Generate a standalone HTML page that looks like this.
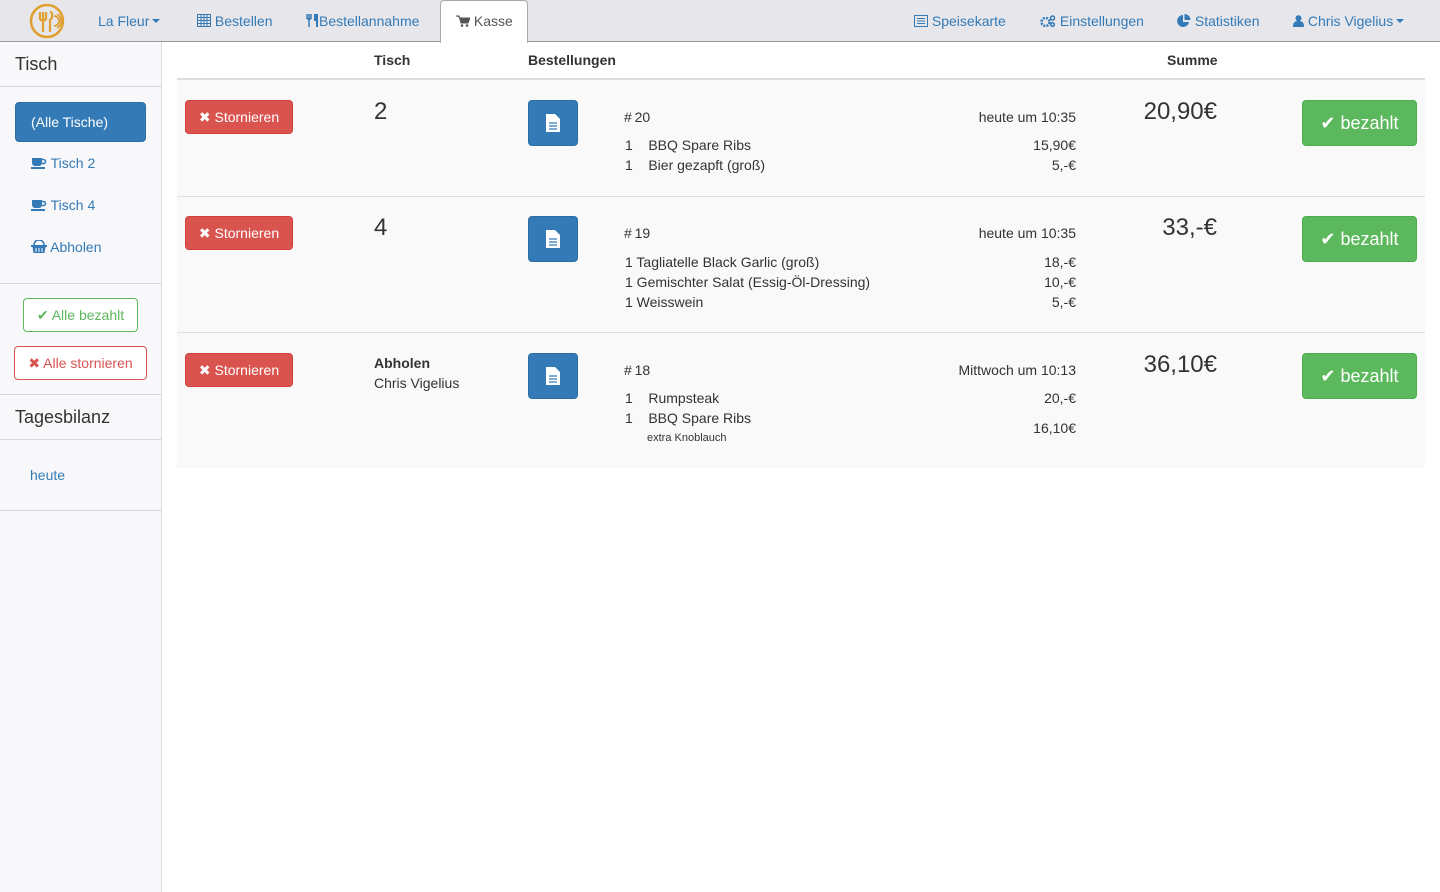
<!DOCTYPE html>
<html><head><meta charset="utf-8"><style>
*{box-sizing:border-box;margin:0;padding:0}
body{width:1440px;height:892px;position:relative;overflow:hidden;background:#fff;font-family:"Liberation Sans",sans-serif;font-size:14px;color:#333}
.a{position:absolute;white-space:nowrap;line-height:20px}
.nav{position:absolute;left:0;top:0;width:1440px;height:42px;background:#e7e7eb;border-bottom:1px solid #9a9a9a}
.nl{color:#337ab7;font-size:14px}
.side{position:absolute;left:0;top:42px;width:162px;height:850px;background:#f8f8fa;border-right:1px solid #ddd}
.hr{position:absolute;left:0;width:161px;height:1px;background:#d5d5dc}
.btn{position:absolute;border-radius:4px;text-align:center;line-height:20px}
.red{background:#d9534f;border:1px solid #d43f3a;color:#fff}
.blue{background:#337ab7;border:1px solid #2e6da4;color:#fff}
.green{background:#5cb85c;border:1px solid #4cae4c;color:#fff}
.row{position:absolute;left:177px;width:1248px;background:#f9f9f9;border-top:1px solid #ddd}
.r{text-align:right}
svg{vertical-align:-1px}
.car{display:inline-block;width:0;height:0;border-left:4px solid transparent;border-right:4px solid transparent;border-top:4px solid currentColor;vertical-align:3px;margin-left:3px}
</style></head><body>
<div class="nav"></div>
<svg style="position:absolute;left:29px;top:3px" width="36" height="36" viewBox="0 0 36 36"><circle cx="18" cy="18" r="16" fill="none" stroke="#e0a030" stroke-width="2.5"/><path d="M11 9v8M14 9v8M17 9v8M11 17h6M14 17v12M21 9c3 0 3 6 0 8v12" stroke="#e0a030" stroke-width="2.2" fill="none"/><path d="M25 13a5 5 0 0 1 0 10M28 11a8 8 0 0 1 0 14" stroke="#e0a030" stroke-width="1.8" fill="none"/></svg>
<div class="a nl" style="left:98px;top:11px">La Fleur<span class="car"></span></div>
<div class="a nl" style="left:197px;top:11px"><svg width="14" height="13" viewBox="0 0 14 13"><rect x="0.5" y="0.5" width="13" height="12" fill="none" stroke="#337ab7"/><path d="M1 3.5h12M1 6.5h12M1 9.5h12M4 1v11M7 1v11M10 1v11" stroke="#337ab7"/></svg> Bestellen</div>
<div class="a nl" style="left:306px;top:11px"><svg width="13" height="13" viewBox="0 0 13 13"><path d="M1 0v5M3 0v5M5 0v5M1 5h4M3 5v8" stroke="#337ab7" stroke-width="1.5" fill="none"/><path d="M8 0h4v13h-2v-6h-2z" fill="#337ab7"/></svg>Bestellannahme</div>
<div style="position:absolute;left:440px;top:0;width:88px;height:43px;background:#fff;border:1px solid #aaa;border-bottom:none;border-radius:4px 4px 0 0"></div>
<div class="a" style="left:456px;top:11px;color:#555"><svg width="14" height="12" viewBox="0 0 14 12"><path d="M0 1h3l2 7h7l2-5H4" fill="#555" stroke="#555"/><circle cx="6" cy="10.5" r="1.3" fill="#555"/><circle cx="11" cy="10.5" r="1.3" fill="#555"/></svg> Kasse</div>
<div class="a nl" style="left:914px;top:11px"><svg width="14" height="12" viewBox="0 0 14 12"><rect x="0.5" y="0.5" width="13" height="11" fill="none" stroke="#337ab7"/><path d="M3 3.5h8M3 6h8M3 8.5h8" stroke="#337ab7"/></svg> Speisekarte</div>
<div class="a nl" style="left:1040px;top:11px"><svg width="16" height="12" viewBox="0 0 16 12"><circle cx="5.5" cy="7" r="4" fill="none" stroke="#337ab7" stroke-width="2.5" stroke-dasharray="2 1.2"/><circle cx="12.5" cy="3" r="2" fill="none" stroke="#337ab7" stroke-width="1.5"/><circle cx="12.5" cy="9.5" r="1.8" fill="none" stroke="#337ab7" stroke-width="1.5"/></svg> Einstellungen</div>
<div class="a nl" style="left:1177px;top:11px"><svg width="14" height="13" viewBox="0 0 14 13"><path d="M6 1a6 6 0 1 0 6 7H6z" fill="#337ab7"/><path d="M7.5 0v6h6a6 6 0 0 0-6-6z" fill="#337ab7"/></svg> Statistiken</div>
<div class="a nl" style="left:1293px;top:11px"><svg width="11" height="12" viewBox="0 0 11 12"><circle cx="5.5" cy="3.2" r="3" fill="#337ab7"/><path d="M0 12c0-5 2-6 5.5-6S11 7 11 12z" fill="#337ab7"/></svg> Chris Vigelius<span class="car"></span></div>

<div class="side"></div>
<div class="a" style="left:15px;top:53px;font-size:18px;line-height:22px">Tisch</div>
<div class="hr" style="top:86px"></div>
<div class="btn blue" style="left:15px;top:102px;width:131px;height:40px;line-height:38px;text-align:left;padding-left:15px">(Alle Tische)</div>
<div class="a nl" style="left:31px;top:153px"><svg width="16" height="11" viewBox="0 0 16 11"><path d="M1 0h10v5a3 3 0 0 1-3 3H4a3 3 0 0 1-3-3z" fill="#337ab7"/><path d="M11 1.5h1.5a2 2 0 0 1 0 4H11" stroke="#337ab7" fill="none" stroke-width="1.5"/><rect x="0" y="9" width="14" height="2" fill="#337ab7"/></svg> Tisch 2</div>
<div class="a nl" style="left:31px;top:195px"><svg width="16" height="11" viewBox="0 0 16 11"><path d="M1 0h10v5a3 3 0 0 1-3 3H4a3 3 0 0 1-3-3z" fill="#337ab7"/><path d="M11 1.5h1.5a2 2 0 0 1 0 4H11" stroke="#337ab7" fill="none" stroke-width="1.5"/><rect x="0" y="9" width="14" height="2" fill="#337ab7"/></svg> Tisch 4</div>
<div class="a nl" style="left:31px;top:237px"><svg width="16" height="13" viewBox="0 0 16 13"><path d="M3 5a5 5 0 0 1 10 0" stroke="#337ab7" fill="none" stroke-width="1.5"/><path d="M0 5h16v2H0zM1.5 7h13l-1 6h-11z" fill="#337ab7"/><path d="M5 8v4M8 8v4M11 8v4" stroke="#f8f8fa"/></svg> Abholen</div>
<div class="hr" style="top:283px"></div>
<div class="btn" style="left:23px;top:298px;width:115px;height:34px;line-height:32px;border:1px solid #5cb85c;color:#5cb85c;background:#fff">✔ Alle bezahlt</div>
<div class="btn" style="left:14px;top:346px;width:133px;height:34px;line-height:32px;border:1px solid #d9534f;color:#d9534f;background:#fff">✖ Alle stornieren</div>
<div class="hr" style="top:394px"></div>
<div class="a" style="left:15px;top:406px;font-size:18px;line-height:22px">Tagesbilanz</div>
<div class="hr" style="top:439px"></div>
<div class="a nl" style="left:30px;top:465px">heute</div>
<div class="hr" style="top:510px"></div>

<div class="a" style="left:374px;top:50px;font-weight:bold">Tisch</div>
<div class="a" style="left:528px;top:50px;font-weight:bold">Bestellungen</div>
<div class="a" style="left:1167px;top:50px;font-weight:bold">Summe</div>
<div style="position:absolute;left:177px;top:78px;width:1248px;height:2px;background:#ddd"></div>

<div class="row" style="top:80px;height:116px;border-top:none"></div>
<div class="row" style="top:196px;height:137px"></div>
<div class="row" style="top:332px;height:136px"></div>

<!-- row 1 -->
<div class="btn red" style="left:185px;top:100px;width:108px;height:34px;line-height:32px">✖ Stornieren</div>
<div class="a" style="left:374px;top:98px;font-size:24px;line-height:28px">2</div>
<div class="btn blue" style="left:528px;top:100px;width:50px;height:46px"><svg style="margin-top:13px" width="14" height="18" viewBox="0 0 14 18"><path d="M0 0h9l5 5v13H0z" fill="#fff"/><path d="M3 9h8M3 12h8M3 15h8" stroke="#337ab7" stroke-width="1.2"/></svg></div>
<div class="a" style="left:624px;top:107px">#&#8239;20</div>
<div class="a r" style="left:876px;width:200px;top:107px">heute um 10:35</div>
<div class="a" style="left:625px;top:135px">1&nbsp;&nbsp;&nbsp; BBQ Spare Ribs</div>
<div class="a" style="left:625px;top:155px">1&nbsp;&nbsp;&nbsp; Bier gezapft (groß)</div>
<div class="a r" style="left:876px;width:200px;top:135px">15,90€</div>
<div class="a r" style="left:876px;width:200px;top:155px">5,-€</div>
<div class="a r" style="left:1017px;width:200px;top:98px;font-size:24px;line-height:28px">20,90€</div>
<div class="btn green" style="left:1302px;top:100px;width:115px;height:46px;line-height:44px;font-size:18px">✔ bezahlt</div>

<!-- row 2 -->
<div class="btn red" style="left:185px;top:216px;width:108px;height:34px;line-height:32px">✖ Stornieren</div>
<div class="a" style="left:374px;top:214px;font-size:24px;line-height:28px">4</div>
<div class="btn blue" style="left:528px;top:216px;width:50px;height:46px"><svg style="margin-top:13px" width="14" height="18" viewBox="0 0 14 18"><path d="M0 0h9l5 5v13H0z" fill="#fff"/><path d="M3 9h8M3 12h8M3 15h8" stroke="#337ab7" stroke-width="1.2"/></svg></div>
<div class="a" style="left:624px;top:223px">#&#8239;19</div>
<div class="a r" style="left:876px;width:200px;top:223px">heute um 10:35</div>
<div class="a" style="left:625px;top:252px">1 Tagliatelle Black Garlic (groß)</div>
<div class="a" style="left:625px;top:272px">1 Gemischter Salat (Essig-Öl-Dressing)</div>
<div class="a" style="left:625px;top:292px">1 Weisswein</div>
<div class="a r" style="left:876px;width:200px;top:252px">18,-€</div>
<div class="a r" style="left:876px;width:200px;top:272px">10,-€</div>
<div class="a r" style="left:876px;width:200px;top:292px">5,-€</div>
<div class="a r" style="left:1017px;width:200px;top:214px;font-size:24px;line-height:28px">33,-€</div>
<div class="btn green" style="left:1302px;top:216px;width:115px;height:46px;line-height:44px;font-size:18px">✔ bezahlt</div>

<!-- row 3 -->
<div class="btn red" style="left:185px;top:353px;width:108px;height:34px;line-height:32px">✖ Stornieren</div>
<div class="a" style="left:374px;top:353px;font-weight:bold">Abholen</div>
<div class="a" style="left:374px;top:373px">Chris Vigelius</div>
<div class="btn blue" style="left:528px;top:353px;width:50px;height:46px"><svg style="margin-top:13px" width="14" height="18" viewBox="0 0 14 18"><path d="M0 0h9l5 5v13H0z" fill="#fff"/><path d="M3 9h8M3 12h8M3 15h8" stroke="#337ab7" stroke-width="1.2"/></svg></div>
<div class="a" style="left:624px;top:360px">#&#8239;18</div>
<div class="a r" style="left:876px;width:200px;top:360px">Mittwoch um 10:13</div>
<div class="a" style="left:625px;top:388px">1&nbsp;&nbsp;&nbsp; Rumpsteak</div>
<div class="a" style="left:625px;top:408px">1&nbsp;&nbsp;&nbsp; BBQ Spare Ribs</div>
<div class="a" style="left:647px;top:430px;font-size:11px;line-height:16px">extra Knoblauch</div>
<div class="a r" style="left:876px;width:200px;top:388px">20,-€</div>
<div class="a r" style="left:876px;width:200px;top:418px">16,10€</div>
<div class="a r" style="left:1017px;width:200px;top:351px;font-size:24px;line-height:28px">36,10€</div>
<div class="btn green" style="left:1302px;top:353px;width:115px;height:46px;line-height:44px;font-size:18px">✔ bezahlt</div>
</body></html>
